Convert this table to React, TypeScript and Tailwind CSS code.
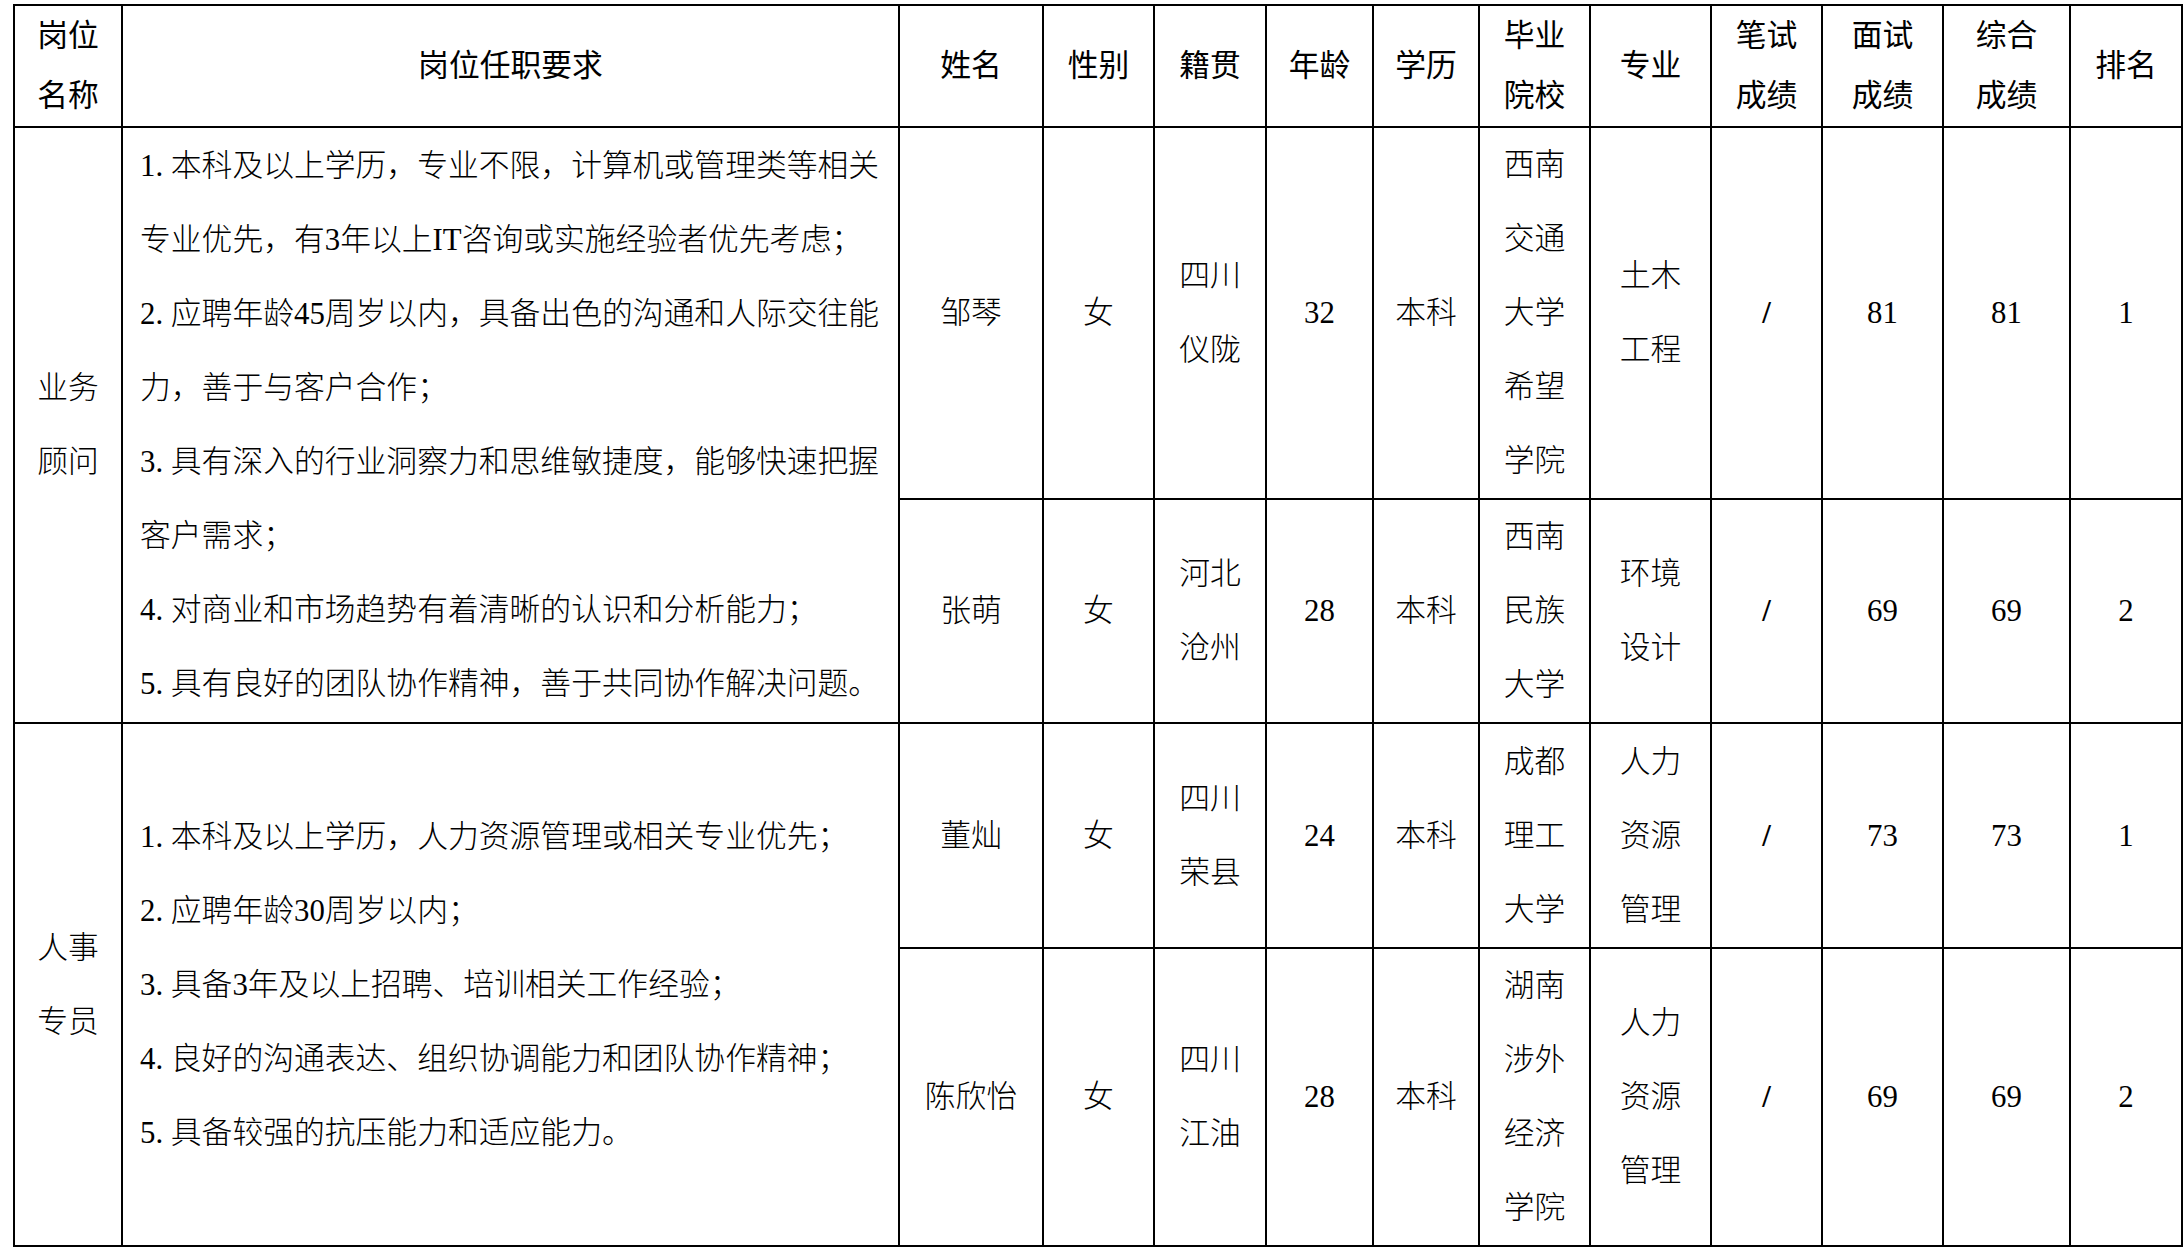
import React from "react";

const FONT = "font-['Liberation_Serif','Noto_Sans_CJK_SC',serif]";

type Row = {
  name: string;
  sex: string;
  origin: string[];
  age: string;
  edu: string;
  school: string[];
  major: string[];
  written: string;
  interview: string;
  total: string;
  rank: string;
  height: string;
};

const Stack = ({ items }: { items: string[] }) => (
  <>
    {items.map((s, i) => (
      <div key={i}>{s}</div>
    ))}
  </>
);

const Req = ({ lines }: { lines: [string, string][] }) => (
  <>
    {lines.map(([num, text], i) => (
      <div key={i} className="whitespace-nowrap">
        {num ? <span className="inline-block w-[1em]">{num}</span> : null}
        {text}
      </div>
    ))}
  </>
);

const td = "border-2 border-black p-0 text-center align-middle";

const BodyCells = ({ r }: { r: Row }) => (
  <>
    <td className={td}>{r.name}</td>
    <td className={td}>{r.sex}</td>
    <td className={td}>
      <Stack items={r.origin} />
    </td>
    <td className={td}>{r.age}</td>
    <td className={td}>{r.edu}</td>
    <td className={td}>
      <Stack items={r.school} />
    </td>
    <td className={td}>
      <Stack items={r.major} />
    </td>
    <td className={`${td} font-bold`}>{r.written}</td>
    <td className={td}>{r.interview}</td>
    <td className={td}>{r.total}</td>
    <td className={td}>{r.rank}</td>
  </>
);

const rows: Row[] = [
  {
    name: "邹琴",
    sex: "女",
    origin: ["四川", "仪陇"],
    age: "32",
    edu: "本科",
    school: ["西南", "交通", "大学", "希望", "学院"],
    major: ["土木", "工程"],
    written: "/",
    interview: "81",
    total: "81",
    rank: "1",
    height: "h-[370px]",
  },
  {
    name: "张萌",
    sex: "女",
    origin: ["河北", "沧州"],
    age: "28",
    edu: "本科",
    school: ["西南", "民族", "大学"],
    major: ["环境", "设计"],
    written: "/",
    interview: "69",
    total: "69",
    rank: "2",
    height: "h-[224px]",
  },
  {
    name: "董灿",
    sex: "女",
    origin: ["四川", "荣县"],
    age: "24",
    edu: "本科",
    school: ["成都", "理工", "大学"],
    major: ["人力", "资源", "管理"],
    written: "/",
    interview: "73",
    total: "73",
    rank: "1",
    height: "h-[225px]",
  },
  {
    name: "陈欣怡",
    sex: "女",
    origin: ["四川", "江油"],
    age: "28",
    edu: "本科",
    school: ["湖南", "涉外", "经济", "学院"],
    major: ["人力", "资源", "管理"],
    written: "/",
    interview: "69",
    total: "69",
    rank: "2",
    height: "h-[295px]",
  },
];

const req1: [string, string][] = [
  ["1.", "本科及以上学历，专业不限，计算机或管理类等相关"],
  ["", "专业优先，有3年以上IT咨询或实施经验者优先考虑；"],
  ["2.", "应聘年龄45周岁以内，具备出色的沟通和人际交往能"],
  ["", "力，善于与客户合作；"],
  ["3.", "具有深入的行业洞察力和思维敏捷度，能够快速把握"],
  ["", "客户需求；"],
  ["4.", "对商业和市场趋势有着清晰的认识和分析能力；"],
  ["5.", "具有良好的团队协作精神，善于共同协作解决问题。"],
];

const req2: [string, string][] = [
  ["1.", "本科及以上学历，人力资源管理或相关专业优先；"],
  ["2.", "应聘年龄30周岁以内；"],
  ["3.", "具备3年及以上招聘、培训相关工作经验；"],
  ["4.", "良好的沟通表达、组织协调能力和团队协作精神；"],
  ["5.", "具备较强的抗压能力和适应能力。"],
];

const headers: string[][] = [
  ["岗位", "名称"],
  ["岗位任职要求"],
  ["姓名"],
  ["性别"],
  ["籍贯"],
  ["年龄"],
  ["学历"],
  ["毕业", "院校"],
  ["专业"],
  ["笔试", "成绩"],
  ["面试", "成绩"],
  ["综合", "成绩"],
  ["排名"],
];

export default function App() {
  return (
    <div className={`min-h-[1253px] w-[2184px] bg-white pl-[13px] pt-[4px] text-black ${FONT}`}>
      <table className="w-[2168px] table-fixed border-collapse border-2 border-black text-[30.8px] font-light">
        <colgroup>
          <col className="w-[108px]" />
          <col className="w-[777px]" />
          <col className="w-[144px]" />
          <col className="w-[111px]" />
          <col className="w-[112px]" />
          <col className="w-[107px]" />
          <col className="w-[106px]" />
          <col className="w-[111px]" />
          <col className="w-[121px]" />
          <col className="w-[111px]" />
          <col className="w-[121px]" />
          <col className="w-[127px]" />
          <col className="w-[112px]" />
        </colgroup>
        <thead>
          <tr className="h-[120px] font-normal leading-[60px]">
            {headers.map((h, i) => (
              <th key={i} className={`${td} font-normal`}>
                <Stack items={h} />
              </th>
            ))}
          </tr>
        </thead>
        <tbody className="leading-[74px]">
          <tr className={rows[0].height}>
            <td rowSpan={2} className={td}>
              <Stack items={["业务", "顾问"]} />
            </td>
            <td rowSpan={2} className="border-2 border-black p-0 pl-[17px] text-left align-middle">
              <Req lines={req1} />
            </td>
            <BodyCells r={rows[0]} />
          </tr>
          <tr className={rows[1].height}>
            <BodyCells r={rows[1]} />
          </tr>
          <tr className={rows[2].height}>
            <td rowSpan={2} className={td}>
              <Stack items={["人事", "专员"]} />
            </td>
            <td rowSpan={2} className="border-2 border-black p-0 pl-[17px] text-left align-middle">
              <Req lines={req2} />
            </td>
            <BodyCells r={rows[2]} />
          </tr>
          <tr className={rows[3].height}>
            <BodyCells r={rows[3]} />
          </tr>
        </tbody>
      </table>
    </div>
  );
}
